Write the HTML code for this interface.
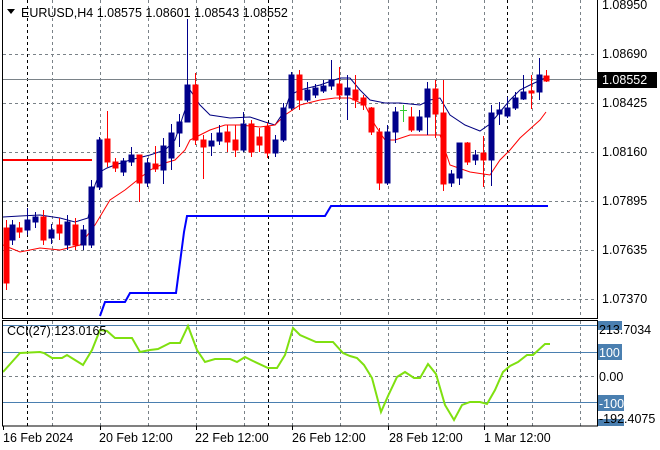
<!DOCTYPE html>
<html><head><meta charset="utf-8"><style>
html,body{margin:0;padding:0;background:#fff}
svg{display:block}
text{font-family:"Liberation Sans",sans-serif;font-size:12.5px;fill:#000}
</style></head><body>
<svg width="660" height="450" viewBox="0 0 660 450" xmlns="http://www.w3.org/2000/svg">
<rect width="660" height="450" fill="#fff"/>
<g stroke="#7a8288" stroke-width="1" stroke-dasharray="3,3">
<line x1="3" y1="54.5" x2="597" y2="54.5"/><line x1="3" y1="103.5" x2="597" y2="103.5"/><line x1="3" y1="152.5" x2="597" y2="152.5"/><line x1="3" y1="201.5" x2="597" y2="201.5"/><line x1="3" y1="250.5" x2="597" y2="250.5"/><line x1="3" y1="299.5" x2="597" y2="299.5"/>
<line x1="52.5" y1="0" x2="52.5" y2="318"/><line x1="100.5" y1="0" x2="100.5" y2="318"/><line x1="148.5" y1="0" x2="148.5" y2="318"/><line x1="196.5" y1="0" x2="196.5" y2="318"/><line x1="244.5" y1="0" x2="244.5" y2="318"/><line x1="292.5" y1="0" x2="292.5" y2="318"/><line x1="340.5" y1="0" x2="340.5" y2="318"/><line x1="388.5" y1="0" x2="388.5" y2="318"/><line x1="436.5" y1="0" x2="436.5" y2="318"/><line x1="484.5" y1="0" x2="484.5" y2="318"/><line x1="532.5" y1="0" x2="532.5" y2="318"/><line x1="580.5" y1="0" x2="580.5" y2="318"/>
<line x1="52.5" y1="321" x2="52.5" y2="426"/><line x1="100.5" y1="321" x2="100.5" y2="426"/><line x1="148.5" y1="321" x2="148.5" y2="426"/><line x1="196.5" y1="321" x2="196.5" y2="426"/><line x1="244.5" y1="321" x2="244.5" y2="426"/><line x1="292.5" y1="321" x2="292.5" y2="426"/><line x1="340.5" y1="321" x2="340.5" y2="426"/><line x1="388.5" y1="321" x2="388.5" y2="426"/><line x1="436.5" y1="321" x2="436.5" y2="426"/><line x1="484.5" y1="321" x2="484.5" y2="426"/><line x1="532.5" y1="321" x2="532.5" y2="426"/><line x1="580.5" y1="321" x2="580.5" y2="426"/>
<line x1="3" y1="376.5" x2="597" y2="376.5"/>
</g>
<g stroke="#000" stroke-width="1" stroke-dasharray="3,3">
<line x1="27.5" y1="0" x2="27.5" y2="318"/><line x1="268.5" y1="0" x2="268.5" y2="318"/><line x1="507.5" y1="0" x2="507.5" y2="318"/>
<line x1="27.5" y1="321" x2="27.5" y2="426"/><line x1="268.5" y1="321" x2="268.5" y2="426"/><line x1="507.5" y1="321" x2="507.5" y2="426"/>
</g>
<line x1="3" y1="79.5" x2="597" y2="79.5" stroke="#7a8288"/>
<line x1="3" y1="160" x2="92" y2="160" stroke="#f00" stroke-width="2"/>
<polyline fill="none" stroke="#0000ff" stroke-width="2" points="100,316 105,302 125,302 130,293 176,293 184,232 187,216 325,216 331,206 548,206"/>
<polyline fill="none" stroke="#000080" stroke-width="1" points="3,217 20,216 40,215 60,218 75,222 88,218 95,185 100,172 107,168 115,165 130,160 150,155 165,150 175,140 185,110 190,90 200,105 210,115 230,118 250,117 265,122 275,125 285,110 290,95 300,90 320,85 340,78 350,78 360,90 370,100 385,103 400,103 420,105 430,100 440,98 450,115 465,125 480,131 490,124 500,112 510,100 520,90 530,85 545,78"/>
<polyline fill="none" stroke="#f00" stroke-width="1" points="3,245 20,252 40,248 60,250 80,245 95,225 110,200 125,190 140,178 150,170 165,163 175,160 185,150 190,140 200,135 210,130 225,125 240,125 260,127 275,125 285,115 300,105 320,100 335,98 350,98 365,105 375,125 385,140 395,140 410,135 430,135 440,135 450,165 470,172 490,175 500,160 510,150 520,138 540,120 546,112"/>
<g stroke-width="1">
<g stroke="#f00" fill="#f00">
<line x1="6.5" y1="220" x2="6.5" y2="290"/><rect x="4" y="228" width="5" height="55"/>
<line x1="19.5" y1="222" x2="19.5" y2="238"/><rect x="17" y="228" width="5" height="4"/>
<line x1="43.5" y1="210" x2="43.5" y2="245"/><rect x="41" y="217" width="5" height="23"/>
<line x1="59.5" y1="218" x2="59.5" y2="240"/><rect x="57" y="225" width="5" height="8"/>
<line x1="75.5" y1="218" x2="75.5" y2="250"/><rect x="73" y="225" width="5" height="20"/>
<line x1="107.5" y1="111" x2="107.5" y2="167"/><rect x="105" y="139" width="5" height="23"/>
<line x1="115.5" y1="158" x2="115.5" y2="172"/><rect x="113" y="162" width="5" height="6"/>
<line x1="139.5" y1="155" x2="139.5" y2="202"/><rect x="137" y="155" width="5" height="28"/>
<line x1="155.5" y1="146" x2="155.5" y2="172"/><rect x="153" y="164" width="5" height="5"/>
<line x1="195.5" y1="73" x2="195.5" y2="145"/><rect x="193" y="85" width="5" height="55"/>
<line x1="203.5" y1="135" x2="203.5" y2="179"/><rect x="201" y="140" width="5" height="7"/>
<line x1="227.5" y1="125" x2="227.5" y2="152"/><rect x="225" y="132" width="5" height="10"/>
<line x1="235.5" y1="125" x2="235.5" y2="157"/><rect x="233" y="140" width="5" height="10"/>
<line x1="251.5" y1="120" x2="251.5" y2="157"/><rect x="249" y="124" width="5" height="28"/>
<line x1="259.5" y1="128" x2="259.5" y2="152"/><rect x="257" y="137" width="5" height="8"/>
<line x1="267.5" y1="123" x2="267.5" y2="158"/><rect x="265" y="127" width="5" height="26"/>
<line x1="299.5" y1="70" x2="299.5" y2="110"/><rect x="297" y="75" width="5" height="25"/>
<line x1="339.5" y1="67" x2="339.5" y2="100"/><rect x="337" y="84" width="5" height="11"/>
<line x1="355.5" y1="75" x2="355.5" y2="108"/><rect x="353" y="90" width="5" height="10"/>
<line x1="363.5" y1="95" x2="363.5" y2="110"/><rect x="361" y="98" width="5" height="7"/>
<line x1="371.5" y1="107" x2="371.5" y2="135"/><rect x="369" y="108" width="5" height="24"/>
<line x1="379.5" y1="128" x2="379.5" y2="190"/><rect x="377" y="132" width="5" height="51"/>
<line x1="411.5" y1="107" x2="411.5" y2="132"/><rect x="409" y="117" width="5" height="13"/>
<line x1="435.5" y1="80" x2="435.5" y2="138"/><rect x="433" y="89" width="5" height="25"/>
<line x1="443.5" y1="80" x2="443.5" y2="191"/><rect x="441" y="113" width="5" height="71"/>
<line x1="467.5" y1="142" x2="467.5" y2="165"/><rect x="465" y="143" width="5" height="19"/>
<line x1="483.5" y1="136" x2="483.5" y2="187"/><rect x="481" y="153" width="5" height="7"/>
<line x1="531.5" y1="75" x2="531.5" y2="109"/><rect x="529" y="91" width="5" height="2"/>
<line x1="546.5" y1="70" x2="546.5" y2="82"/><rect x="544" y="76" width="5" height="5"/>
</g>
<g stroke="#00008b" fill="#00008b">
<line x1="12.5" y1="220" x2="12.5" y2="245"/><rect x="10" y="225" width="5" height="15"/>
<line x1="27.5" y1="208" x2="27.5" y2="235"/><rect x="25" y="220" width="5" height="10"/>
<line x1="35.5" y1="212" x2="35.5" y2="228"/><rect x="33" y="217" width="5" height="5"/>
<line x1="51.5" y1="224" x2="51.5" y2="244"/><rect x="49" y="230" width="5" height="8"/>
<line x1="67.5" y1="215" x2="67.5" y2="250"/><rect x="65" y="222" width="5" height="23"/>
<line x1="83.5" y1="225" x2="83.5" y2="250"/><rect x="81" y="230" width="5" height="15"/>
<line x1="91.5" y1="180" x2="91.5" y2="248"/><rect x="89" y="187" width="5" height="58"/>
<line x1="99.5" y1="137" x2="99.5" y2="190"/><rect x="97" y="140" width="5" height="47"/>
<line x1="123.5" y1="158" x2="123.5" y2="176"/><rect x="121" y="161" width="5" height="11"/>
<line x1="131.5" y1="147" x2="131.5" y2="166"/><rect x="129" y="155" width="5" height="7"/>
<line x1="147.5" y1="158" x2="147.5" y2="187"/><rect x="145" y="163" width="5" height="20"/>
<line x1="163.5" y1="138" x2="163.5" y2="184"/><rect x="161" y="146" width="5" height="24"/>
<line x1="171.5" y1="124" x2="171.5" y2="170"/><rect x="169" y="133" width="5" height="25"/>
<line x1="179.5" y1="114" x2="179.5" y2="147"/><rect x="177" y="122" width="5" height="11"/>
<line x1="187.5" y1="19" x2="187.5" y2="122"/><rect x="185" y="85" width="5" height="37"/>
<line x1="211.5" y1="133" x2="211.5" y2="156"/><rect x="209" y="141" width="5" height="5"/>
<line x1="219.5" y1="125" x2="219.5" y2="145"/><rect x="217" y="133" width="5" height="8"/>
<line x1="243.5" y1="112" x2="243.5" y2="152"/><rect x="241" y="124" width="5" height="26"/>
<line x1="275.5" y1="135" x2="275.5" y2="157"/><rect x="273" y="140" width="5" height="13"/>
<line x1="283.5" y1="103" x2="283.5" y2="142"/><rect x="281" y="108" width="5" height="32"/>
<line x1="291.5" y1="72" x2="291.5" y2="110"/><rect x="289" y="75" width="5" height="33"/>
<line x1="307.5" y1="82" x2="307.5" y2="102"/><rect x="305" y="90" width="5" height="10"/>
<line x1="315.5" y1="84" x2="315.5" y2="98"/><rect x="313" y="88" width="5" height="7"/>
<line x1="323.5" y1="80" x2="323.5" y2="93"/><rect x="321" y="86" width="5" height="5"/>
<line x1="331.5" y1="60" x2="331.5" y2="90"/><rect x="329" y="80" width="5" height="6"/>
<line x1="347.5" y1="75" x2="347.5" y2="120"/><rect x="345" y="88" width="5" height="7"/>
<line x1="387.5" y1="125" x2="387.5" y2="185"/><rect x="385" y="132" width="5" height="51"/>
<line x1="395.5" y1="107" x2="395.5" y2="143"/><rect x="393" y="112" width="5" height="20"/>
<line x1="419.5" y1="110" x2="419.5" y2="132"/><rect x="417" y="117" width="5" height="13"/>
<line x1="427.5" y1="82" x2="427.5" y2="135"/><rect x="425" y="89" width="5" height="28"/>
<line x1="451.5" y1="170" x2="451.5" y2="187"/><rect x="449" y="174" width="5" height="9"/>
<line x1="459.5" y1="143" x2="459.5" y2="185"/><rect x="457" y="143" width="5" height="35"/>
<line x1="475.5" y1="150" x2="475.5" y2="165"/><rect x="473" y="155" width="5" height="5"/>
<line x1="491.5" y1="105" x2="491.5" y2="186"/><rect x="489" y="113" width="5" height="47"/>
<line x1="499.5" y1="102" x2="499.5" y2="125"/><rect x="497" y="110" width="5" height="4"/>
<line x1="507.5" y1="97" x2="507.5" y2="118"/><rect x="505" y="108" width="5" height="8"/>
<line x1="515.5" y1="92" x2="515.5" y2="110"/><rect x="513" y="98" width="5" height="10"/>
<line x1="523.5" y1="75" x2="523.5" y2="100"/><rect x="521" y="92" width="5" height="7"/>
<line x1="539.5" y1="58" x2="539.5" y2="100"/><rect x="537" y="75" width="5" height="17"/>
</g>
<line x1="403.5" y1="105" x2="403.5" y2="122" stroke="#32cd32"/><line x1="400" y1="110.5" x2="407" y2="110.5" stroke="#32cd32"/>
</g>
<g stroke="#4a7fb0" stroke-width="1">
<line x1="3" y1="325.5" x2="597" y2="325.5"/><line x1="3" y1="352.5" x2="597" y2="352.5"/><line x1="3" y1="402.5" x2="597" y2="402.5"/>
</g>
<polyline fill="none" stroke="#7fe010" stroke-width="2" points="3,372 20,353 40,352 44,353 52,358 62,358 67,355 75,360 83,365 92,350 100,330 107,331 115,338 132,338 140,352 150,350 158,349 170,343 180,343 188,326 197,350 205,362 215,359 230,359 237,362 245,357 253,361 268,368 277,368 285,355 293,328 300,335 316,342 333,342 343,353 350,356 357,358 364,365 372,378 381,412 388,396 397,377 405,372 414,378 420,378 428,364 436,374 445,405 454,420 462,405 470,402 480,402 487,404 495,390 503,372 510,366 518,362 527,355 533,355 545,344 550,344"/>
<g fill="none" stroke="#000" stroke-width="1">
<rect x="2.5" y="-1" width="595" height="319.5"/>
<rect x="2.5" y="320.5" width="595" height="105.5"/>
</g>
<path d="M7,9 L15,9 L11,14 Z" fill="#000"/>
<text x="21" y="17">EURUSD,H4  1.08575 1.08601 1.08543 1.08552</text>
<text x="7" y="335">CCI(27) 123.0165</text>
<g>
<text x="602" y="9">1.08950</text>
<text x="602" y="58">1.08690</text>
<rect x="597" y="72" width="60" height="16" fill="#000"/>
<text x="602" y="84" style="fill:#fff">1.08552</text>
<text x="602" y="107">1.08425</text>
<text x="602" y="156">1.08160</text>
<text x="602" y="205">1.07895</text>
<text x="602" y="254">1.07635</text>
<text x="602" y="303">1.07370</text>
<rect x="598" y="321" width="24" height="9" fill="#4a7fb0"/>
<text x="599" y="334">213.7034</text>
<rect x="598" y="344" width="24" height="16" fill="#4a7fb0"/>
<text x="599" y="357" style="fill:#fff">100</text>
<text x="599" y="381">0.00</text>
<rect x="598" y="395" width="26" height="16" fill="#4a7fb0"/>
<text x="599" y="408" style="fill:#fff">-100</text>
<rect x="598" y="419" width="26" height="7" fill="#4a7fb0"/>
<text x="599" y="423">-192.4075</text>
</g>
<g stroke="#000"><line x1="3.5" y1="426" x2="3.5" y2="430"/><line x1="100.5" y1="426" x2="100.5" y2="430"/><line x1="196.5" y1="426" x2="196.5" y2="430"/><line x1="292.5" y1="426" x2="292.5" y2="430"/><line x1="388.5" y1="426" x2="388.5" y2="430"/><line x1="484.5" y1="426" x2="484.5" y2="430"/></g>
<text x="3" y="442">16 Feb 2024</text>
<text x="99" y="442">20 Feb 12:00</text>
<text x="195" y="442">22 Feb 12:00</text>
<text x="292" y="442">26 Feb 12:00</text>
<text x="389" y="442">28 Feb 12:00</text>
<text x="484" y="442">1 Mar 12:00</text>
</svg>
</body></html>
